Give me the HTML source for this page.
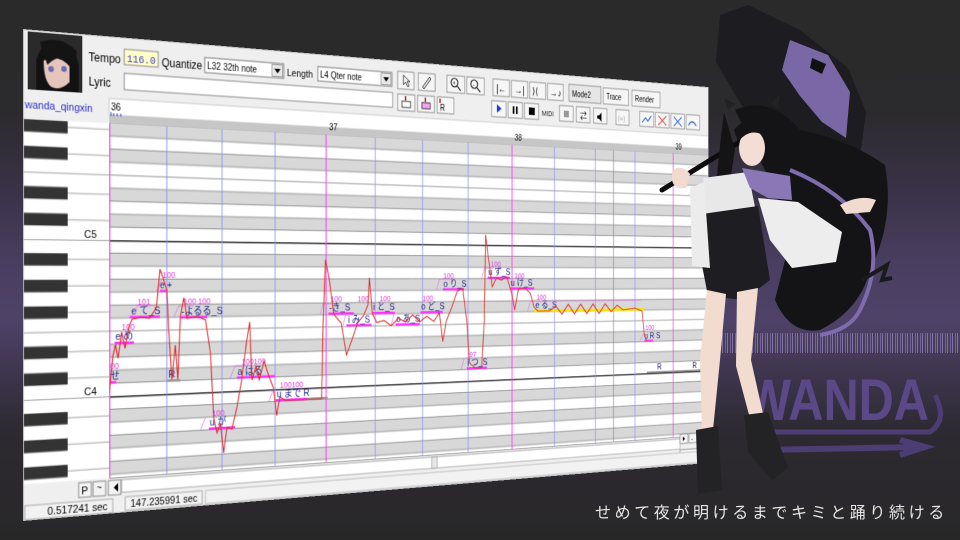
<!DOCTYPE html>
<html><head><meta charset="utf-8"><style>
html,body{margin:0;padding:0}
body{width:960px;height:540px;overflow:hidden;position:relative;
background:linear-gradient(to bottom,#2a2a2a 0,#2b2a2c 110px,#3a3248 190px,#4a3f62 270px,#4e4268 320px,#3f3650 370px,#2d2a31 430px,#282728 540px);
font-family:"Liberation Sans",sans-serif}
#win{position:absolute;left:23px;top:29px;width:949px;height:492px;transform-origin:0 246px;transform:perspective(1000px) rotateY(19deg)}
#win svg{display:block}
.t{font-family:"Liberation Sans","Noto Sans CJK JP",sans-serif}
#jp{position:absolute;left:595px;top:499px;color:#e6e6e6;font-size:16px;letter-spacing:3.6px;font-family:"Liberation Sans","Noto Sans CJK JP",sans-serif;white-space:nowrap}
#wave{position:absolute;left:722px;top:333px;width:238px;height:20px;background:repeating-linear-gradient(to right,#8b7bb0 0 1px,transparent 1px 3px,#7a6aa0 3px 4px,transparent 4px 5px);opacity:.85}
</style></head><body>
<div id="wave"></div>
<svg style="position:absolute;left:0;top:0" width="960" height="540">
<text x="745" y="420" font-family="Liberation Sans" font-weight="bold" font-size="58" fill="#5b4888" transform="translate(745 0) scale(0.84 1) translate(-745 0)">WANDA</text>
<path d="M770 432 Q740 442 760 450 L920 447 M900 440 L925 447 L900 455" stroke="#4c3d74" stroke-width="6" fill="none"/>
<path d="M935 395 Q948 420 930 432 L770 432" stroke="#4c3d74" stroke-width="5" fill="none"/>
</svg>
<div id="win"><svg width="949" height="492" viewBox="0 0 949 492" class="t">
<defs>
<pattern id="rows" x="0" y="49" width="949" height="161.04" patternUnits="userSpaceOnUse">
<rect width="949" height="161.04" fill="#fff"/>
<rect y="13.42" width="949" height="13.42" fill="#d8d8d8"/>
<rect y="40.26" width="949" height="13.42" fill="#d8d8d8"/>
<rect y="67.1" width="949" height="13.42" fill="#d8d8d8"/>
<rect y="107.36" width="949" height="13.42" fill="#d8d8d8"/>
<rect y="134.2" width="949" height="13.42" fill="#d8d8d8"/>
<g stroke="#777" stroke-width="0.8">
<line x1="0" x2="949" y1="13.42" y2="13.42"/><line x1="0" x2="949" y1="26.84" y2="26.84"/><line x1="0" x2="949" y1="40.26" y2="40.26"/><line x1="0" x2="949" y1="53.68" y2="53.68"/><line x1="0" x2="949" y1="67.1" y2="67.1"/><line x1="0" x2="949" y1="80.52" y2="80.52"/><line x1="0" x2="949" y1="93.94" y2="93.94"/><line x1="0" x2="949" y1="107.36" y2="107.36"/><line x1="0" x2="949" y1="120.78" y2="120.78"/><line x1="0" x2="949" y1="134.2" y2="134.2"/><line x1="0" x2="949" y1="147.62" y2="147.62"/></g>
<line x1="0" x2="949" y1="0.7" y2="0.7" stroke="#222" stroke-width="1.4"/>
</pattern>
<pattern id="keys" x="0" y="49" width="94" height="161.04" patternUnits="userSpaceOnUse">
<rect width="94" height="161.04" fill="#fff"/>
<g fill="#333"><rect y="14" width="48" height="12.5"/><rect y="40.8" width="48" height="12.5"/><rect y="67.6" width="48" height="12.5"/><rect y="107.9" width="48" height="12.5"/><rect y="134.7" width="48" height="12.5"/></g>
<g stroke="#888" stroke-width="0.8"><line x1="48" x2="94" y1="20" y2="20"/><line x1="48" x2="94" y1="47" y2="47"/><line x1="48" x2="94" y1="74" y2="74"/><line x1="0" x2="94" y1="93.9" y2="93.9"/><line x1="48" x2="94" y1="114" y2="114"/><line x1="48" x2="94" y1="141" y2="141"/><line x1="0" x2="94" y1="0.5" y2="0.5"/></g>
</pattern>
<clipPath id="gc"><rect x="94" y="89.6" width="855" height="366"/></clipPath>
</defs>
<rect width="949" height="492" fill="#efefef"/>
<rect x="5" y="2" width="59" height="58" fill="#2a2a2a"/>
<path d="M14 60 L14 30 Q20 10 38 10 Q56 12 60 32 L60 60 Z" fill="#121212"/>
<path d="M22 30 Q38 22 50 34 L50 50 Q40 60 30 56 Q22 50 22 30Z" fill="#e6c6bc"/>
<path d="M18 12 Q40 2 58 18 L56 30 Q40 20 26 34 Z" fill="#141414"/>
<circle cx="30" cy="38" r="3" fill="#6a6ab8"/><circle cx="44" cy="37" r="3" fill="#6a6ab8"/>
<text x="71" y="27" font-size="12">Tempo</text>
<rect x="111" y="12" width="39" height="16" fill="#ffffc8" stroke="#8a8a8a"/>
<text x="114" y="25" font-size="11" fill="#3333cc" font-family="Liberation Mono">116.0</text>
<text x="154" y="27" font-size="12">Quantize</text>
<rect x="205" y="14" width="98" height="16" fill="#fff" stroke="#777"/>
<text x="208" y="26" font-size="10">L32 32th note</text>
<rect x="288" y="15.5" width="13.5" height="13" fill="#e8e8e8" stroke="#999"/><path d="M291 20 h8 l-4 5z" fill="#000"/>
<text x="307" y="27" font-size="11">Length</text>
<rect x="347" y="14" width="100" height="16" fill="#fff" stroke="#777"/>
<text x="350" y="26" font-size="10">L4  Qter note</text>
<rect x="432" y="15.5" width="13.5" height="13" fill="#e8e8e8" stroke="#999"/><path d="M435 20 h8 l-4 5z" fill="#000"/>
<g fill="#f6f6f6" stroke="#8a8a8a">
<rect x="455" y="12" width="23" height="20"/><rect x="484" y="12" width="24" height="20"/>
<rect x="525" y="12" width="26" height="20"/><rect x="554" y="12" width="26" height="20"/>
<rect x="593" y="12" width="25" height="20"/><rect x="621" y="12" width="25" height="20"/><rect x="649" y="12" width="25" height="20"/><rect x="677" y="12" width="25" height="20"/>
<rect x="711" y="11" width="52" height="21" fill="#e6e6e6"/><rect x="767" y="12" width="42" height="20"/><rect x="815" y="12" width="48" height="20"/>
</g>
<path d="M463 16 l0 11 l3 -3 l3 5 l2 -1 l-3 -5 l4 0z" fill="none" stroke="#000" stroke-width="0.8"/>
<path d="M490 28 l10 -12 l2 2 l-10 12z" fill="none" stroke="#000"/>
<g fill="none" stroke="#000" stroke-width="1.2"><circle cx="536" cy="20" r="5"/><line x1="540" y1="24" x2="545" y2="29"/><circle cx="565" cy="20" r="5"/><line x1="569" y1="24" x2="574" y2="29"/></g>
<text x="533" y="23" font-size="8">+</text><text x="563" y="23" font-size="8">-</text>
<text x="598" y="27" font-size="12">|←</text><text x="626" y="27" font-size="12">→|</text><text x="653" y="27" font-size="12">⟩⟨</text><text x="681" y="27" font-size="12">→♪</text>
<text x="716" y="26" font-size="10">Mode2</text><text x="772" y="26" font-size="10">Trace</text><text x="820" y="26" font-size="10">Render</text>
<text x="71" y="52" font-size="12">Lyric</text>
<rect x="111" y="37" width="337" height="17" fill="#fff" stroke="#888"/>
<g fill="#f6f6f6" stroke="#8a8a8a">
<rect x="455" y="38" width="24" height="19"/><rect x="483" y="38" width="24" height="19"/><rect x="511" y="38" width="24" height="19"/>
<rect x="591" y="38" width="22" height="19"/><rect x="616" y="38" width="22" height="19"/><rect x="641" y="38" width="22" height="19"/>
<rect x="696" y="38" width="22" height="19"/><rect x="723" y="38" width="22" height="19"/><rect x="751" y="38" width="22" height="19"/><rect x="788" y="38" width="22" height="19"/>
<rect x="828" y="38" width="24" height="19"/><rect x="855" y="38" width="24" height="19"/><rect x="882" y="38" width="24" height="19"/><rect x="909" y="38" width="24" height="19"/>
</g>
<rect x="461" y="46" width="12" height="7" fill="#fff" stroke="#333"/><rect x="489" y="46" width="12" height="7" fill="#f7a0f0" stroke="#333"/><text x="515" y="54" font-size="10">R</text>
<g fill="#c02020"><rect x="465" y="40" width="2" height="5"/><rect x="493" y="40" width="2" height="5"/><rect x="514" y="40" width="2" height="5"/></g>
<path d="M599 42 l7 5 l-7 5z" fill="#1a3ad0"/><rect x="623" y="43" width="2.5" height="9" fill="#000"/><rect x="628" y="43" width="2.5" height="9" fill="#000"/><rect x="648" y="43" width="9" height="9" fill="#000"/>
<text x="668" y="52" font-size="9" fill="#222">MIDI</text>
<rect x="703" y="44" width="8" height="8" fill="#999"/><text x="729" y="53" font-size="11">⇄</text><path d="M757 47 h3 l4 -4 v12 l-4 -4 h-3z" fill="#000"/><text x="791" y="52" font-size="9" fill="#aaa">(∞)</text>
<g stroke-width="1.3" fill="none"><path d="M832 52 l6 -6 l4 4 l6 -7" stroke="#2060e0"/><path d="M860 42 l14 12 M874 42 l-14 12" stroke="#e04040"/><path d="M887 42 l14 12 M901 42 l-14 12" stroke="#2060e0"/><path d="M913 52 q6 -10 14 0" stroke="#2050c0"/></g>
<text x="2" y="79" font-size="11" fill="#2a2ad0">wanda_qingxin</text>
<rect x="94" y="64" width="855" height="17" fill="#fff" stroke="#aaa" stroke-width="0.6"/>
<rect x="94" y="81" width="855" height="8.6" fill="#c6c6c6"/>
<text x="96" y="76" font-size="10">36</text><text x="362" y="84" font-size="10">37</text><text x="626" y="84" font-size="10">38</text><text x="890" y="84" font-size="10">39</text>
<path d="M96 78 v4 M99 79 v3 M103 79 v3 M107 79 v3" stroke="#33c" stroke-width="1"/>
<rect x="0" y="89.6" width="94" height="366" fill="url(#keys)"/>
<rect x="94" y="89.6" width="855" height="366" fill="url(#rows)"/>
<text x="66" y="208" font-size="11">C5</text><text x="66" y="369" font-size="11">C4</text>
<g clip-path="url(#gc)">
<g stroke="#8c8cff" stroke-width="1"><line x1="160" x2="160" y1="89" y2="456"/><line x1="226" x2="226" y1="89" y2="456"/><line x1="292" x2="292" y1="89" y2="456"/><line x1="424" x2="424" y1="89" y2="456"/><line x1="490" x2="490" y1="89" y2="456"/><line x1="556" x2="556" y1="89" y2="456"/><line x1="688" x2="688" y1="89" y2="456"/><line x1="754" x2="754" y1="89" y2="456"/><line x1="820" x2="820" y1="89" y2="456"/></g>
<line x1="784" x2="784" y1="89" y2="456" stroke="#888"/>
<g stroke="#ff33ff" stroke-width="1.2"><line x1="94.6" x2="94.6" y1="89" y2="456"/><line x1="358" x2="358" y1="89" y2="456"/><line x1="622" x2="622" y1="89" y2="456"/><line x1="886" x2="886" y1="89" y2="456"/></g>
<g fill="#9a9a9a"><rect x="160" y="356" width="16" height="2.5"/><rect x="333" y="382" width="27" height="2.5"/><rect x="840" y="369" width="109" height="2"/></g>
<g fill="#ff30ff">
<rect x="94" y="355.5" width="8" height="2.6"/><rect x="100" y="315" width="22" height="2.6"/><rect x="117" y="288.5" width="35" height="2.6"/><rect x="152" y="261.5" width="8" height="2.6"/>
<rect x="176" y="289.5" width="32" height="2.6"/><rect x="210" y="409" width="32" height="2.6"/><rect x="244" y="355.5" width="48" height="2.6"/><rect x="293" y="382" width="40" height="2.6"/>
<rect x="361" y="288" width="34" height="2.6"/><rect x="385" y="301.5" width="34" height="2.6"/><rect x="420" y="288" width="31" height="2.6"/><rect x="452" y="301.5" width="34" height="2.6"/>
<rect x="487" y="288" width="32" height="2.6"/><rect x="519" y="261.5" width="31" height="2.6"/><rect x="554" y="355" width="30" height="2.6"/><rect x="585" y="248" width="34" height="2.6"/>
<rect x="619" y="261" width="37" height="2.6"/><rect x="836" y="328.5" width="15" height="2.6"/></g>
<rect x="656" y="288" width="180" height="3.2" fill="#f0e800"/>
<g font-size="11" fill="#1c1c84" font-family="Liberation Sans,Noto Sans CJK JP,sans-serif">
<text x="95" y="354">せ</text><text x="101" y="313">e め</text><text x="119" y="287">e て_S</text><text x="152" y="260" font-size="10">e +</text><text x="162" y="354">R</text>
<text x="177" y="288">-よるる_S</text><text x="211" y="407">u が</text><text x="245" y="354">a はる</text><text x="294" y="380">u まで R</text>
<text x="362" y="286">-き_S</text><text x="387" y="300">i み_S</text><text x="421" y="286">i と_S</text><text x="453" y="300">o あ_S</text><text x="488" y="286">o ど_S</text>
<text x="520" y="260">o り_S</text><text x="555" y="353">i つ_S</text><text x="586" y="246">u ず_S</text><text x="620" y="259">u け_S</text><text x="658" y="286">e る_S</text><text x="836" y="327">u R S</text>
<text x="858" y="367">R</text><text x="920" y="367">R</text></g>
<g font-size="9" fill="#e040e0">
<text x="95" y="343">00</text><text x="108" y="303">100</text><text x="126" y="277">101</text><text x="155" y="249">100</text><text x="180" y="277">100</text><text x="197" y="277">100</text>
<text x="214" y="397">100</text><text x="250" y="343">100100</text><text x="298" y="370">100100</text><text x="364" y="276">100</text><text x="400" y="276">100</text><text x="430" y="276">100</text>
<text x="520" y="250">100</text><text x="490" y="276">100</text><text x="558" y="343">97</text><text x="590" y="236">100</text><text x="626" y="250">100</text><text x="660" y="276">100</text><text x="838" y="316">100</text></g>
<g stroke="#e070e0" stroke-width="0.8" fill="none">
<path d="M106 317 l8 -13 M118 291 l8 -13 h20 M148 263 l6 -12 M168 291 l6 -12 h18 M200 411 l6 -13 M236 357 l6 -13 h18 M284 384 l6 -13 M350 290 l4 -12 h10 M380 303 l4 -12 M446 303 l4 -12 M510 263 l4 -12 h20 M546 357 l4 -12 M576 250 l4 -12 h14 M646 290 l4 -12 h180 M828 331 l6 -10"/></g>
<polyline fill="none" stroke="#e02a2a" stroke-width="1.2" points="94,368 98,330 101,318 104,332 108,305 112,322 116,300 120,292 130,290 140,291 148,280 152,240 156,250 160,262 162,300 166,356 170,320 173,356 176,290 180,270 184,292 196,290 206,294 212,330 216,400 220,415 224,405 228,437 232,410 238,412 244,390 250,360 256,320 260,297 263,360 268,345 272,360 278,340 284,356 290,370 294,400 298,380 306,384 330,384 352,384 354,300 357,229 362,250 368,290 378,300 385,336 392,320 400,300 408,292 414,280 416,249 420,290 426,300 436,298 446,304 456,296 466,300 476,292 486,300 496,294 506,300 514,290 519,324 524,300 532,284 540,265 548,262 554,300 558,350 566,356 576,356 580,300 582,198 586,225 592,260 598,250 606,252 614,248 622,270 626,288 632,262 642,262 650,268 656,285 662,290 680,290 690,284 700,294 710,282 720,294 730,282 740,294 750,282 760,294 770,282 780,292 790,284 800,290 820,288 832,292 836,322 840,330"/>
</g>
<rect x="0" y="455.6" width="949" height="20" fill="#efefef"/>
<line x1="94" x2="949" y1="455.6" y2="455.6" stroke="#999"/>
<rect x="108" y="458" width="790" height="13" fill="#fff" stroke="#aaa"/>
<rect x="503" y="458" width="8" height="13" fill="#e6e6e6" stroke="#aaa"/>
<g fill="#f4f4f4" stroke="#888"><rect x="60" y="458" width="14" height="15"/><rect x="76" y="458" width="14" height="15"/><rect x="93" y="458" width="14" height="15"/>
<rect x="898" y="452" width="14" height="12"/><rect x="914" y="452" width="14" height="12"/><rect x="930" y="452" width="14" height="12"/><rect x="898" y="472" width="46" height="12"/></g>
<text x="63" y="470" font-size="11">P</text><text x="80" y="468" font-size="10">~</text><path d="M104 461 v9 l-5 -4.5z" fill="#000"/>
<path d="M903 455 v6 l4 -3z" fill="#000"/><text x="918" y="462" font-size="9">-</text><text x="933" y="462" font-size="9">+</text><text x="900" y="482" font-size="9">M</text>
<rect x="2" y="477" width="96" height="14" fill="#f2f2f2" stroke="#aaa"/><text x="26" y="488" font-size="11">0.517241 sec</text>
<rect x="112" y="476" width="90" height="14" fill="#f2f2f2" stroke="#aaa"/><text x="118" y="487" font-size="11">147.235991 sec</text>
<rect x="206" y="476" width="740" height="14" fill="#f2f2f2" stroke="#bbb"/>
<rect x="0.5" y="0.5" width="948" height="491" fill="none" stroke="#bbb"/>
</svg></div>
<svg style="position:absolute;left:0;top:0" width="960" height="540">
<path d="M720 15 L748 5 L800 30 L848 68 L866 112 L858 172 L830 178 L790 142 L742 106 L716 62Z" fill="#1d1c20"/>
<path d="M790 40 L828 55 L850 92 L846 138 L822 122 L800 96 L782 70Z" fill="#7a68a6"/>
<path d="M812 58 l14 6 l-4 10 l-12 -6z" fill="#111"/>
<line x1="662" y1="190" x2="746" y2="138" stroke="#0d0d0d" stroke-width="5" stroke-linecap="round"/>
<path d="M735 110 Q770 95 800 130 Q850 140 885 165 Q895 220 870 270 Q860 310 820 330 Q790 335 775 300 L790 240 Q780 200 770 180Z" fill="#141316"/>
<path d="M790 170 Q840 190 870 230 Q880 270 860 310 Q850 330 820 335" stroke="#7e6cae" stroke-width="4" fill="none"/>
<path d="M862 280 l25 -15 l-5 15 l10 -2" stroke="#1a1a1a" stroke-width="4" fill="none"/>
<path d="M724 112 Q718 160 714 210 L726 205 L735 150Z" fill="#141316"/>
<path d="M728 110 l-4 -12 l12 6z M770 104 l10 -10 l-2 14z" fill="#222"/>
<ellipse cx="752" cy="148" rx="13" ry="18" fill="#f3ddd5"/>
<path d="M734 130 Q752 108 772 128 L770 140 Q752 124 738 142Z" fill="#141316"/>
<path d="M703 178 L748 172 L756 212 L706 222Z" fill="#e8e8e8"/>
<path d="M702 214 L758 206 L770 280 L744 300 L708 296 L699 250Z" fill="#1e1d21"/>
<path d="M690 188 L704 182 L710 268 L692 266Z" fill="#ececec"/>
<path d="M758 198 L798 202 L842 232 L836 262 L792 268 L770 240Z" fill="#ededed"/>
<path d="M742 168 L790 176 L792 200 L768 198 L750 188Z" fill="#8a78b6"/>
<path d="M840 205 Q860 194 876 200 L870 212 L846 214Z" fill="#f1dad0"/>
<path d="M672 170 q10 -6 18 4 l-4 14 q-12 2 -14 -8z" fill="#f1dad0"/>
<path d="M707 290 L726 294 L720 360 L713 430 L702 430 L700 360Z" fill="#f2dbcf"/>
<path d="M737 292 L758 288 L751 360 L764 418 L752 426 L736 366Z" fill="#f2dbcf"/>
<path d="M696 430 L718 426 L722 490 L698 494Z" fill="#232225"/>
<path d="M744 415 L768 412 L788 468 L772 480 L748 452Z" fill="#232225"/>
</svg>
<div id="jp">せめて夜が明けるまでキミと踊り続ける</div>
</body></html>
